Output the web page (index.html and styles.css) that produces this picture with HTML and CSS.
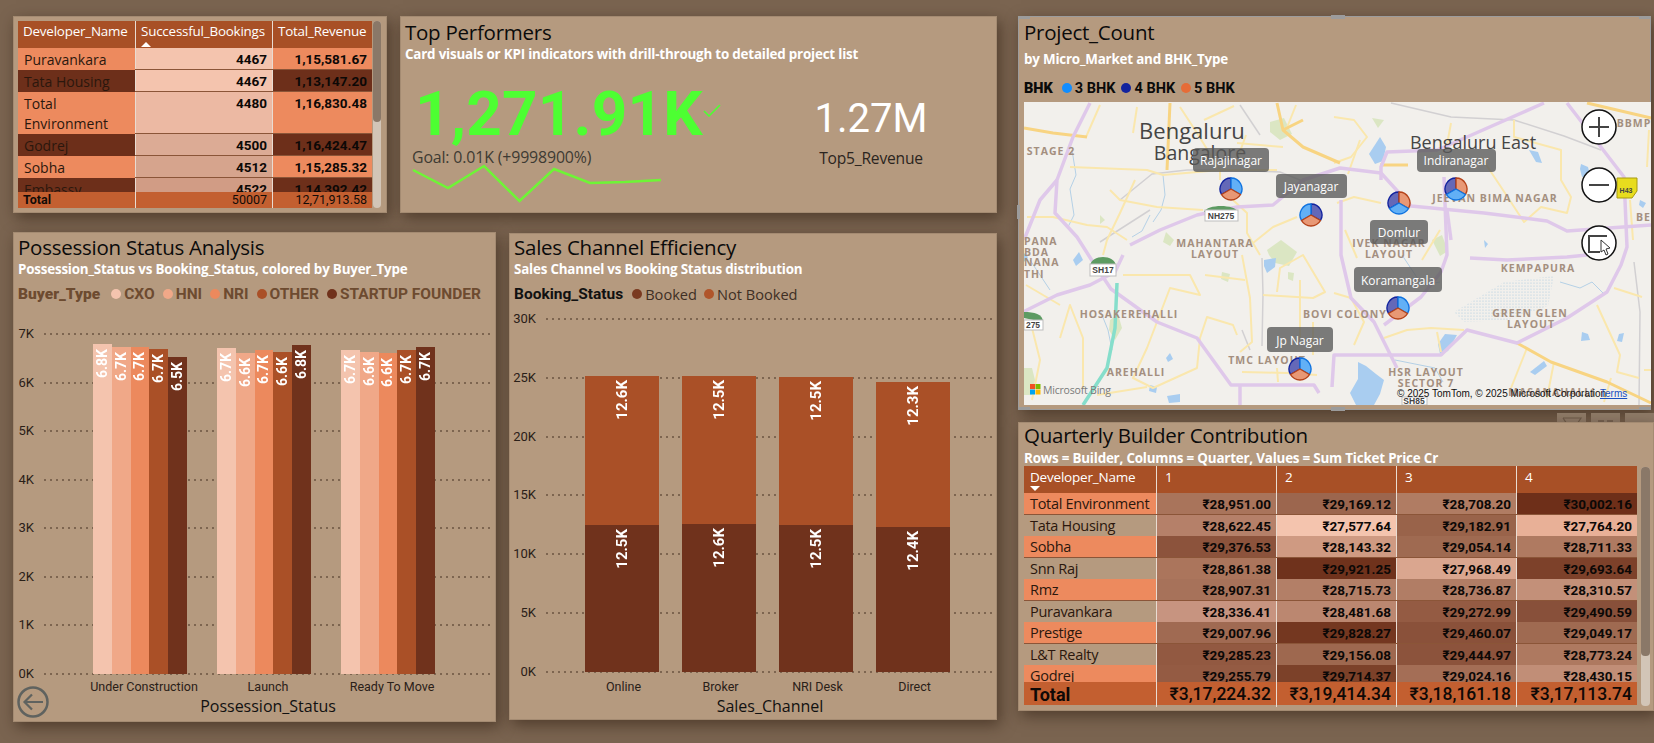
FILE: index.html
```html
<!DOCTYPE html>
<html lang="en">
<head>
<meta charset="utf-8">
<title>Real Estate Dashboard</title>
<link rel="stylesheet" href="styles.css">
</head>
<body>
<main class="page">
  <div class="left">
    <div class="top-row">
      <section class="panel dev-panel">
        <div class="t1">
          <div class="t1-row t1-head">
            <div>Developer_Name</div>
            <div>Successful_Bookings<i class="sort-up"></i></div>
            <div>Total_Revenue</div>
          </div>
          <div class="t1-body">
            <div class="t1-row"><div class="nm or">Puravankara</div><div class="num" style="background:#f4c4ae">4467</div><div class="num or">1,15,581.67</div></div>
            <div class="t1-row"><div class="nm dk">Tata Housing</div><div class="num" style="background:#f4c4ae">4467</div><div class="num dk">1,13,147.20</div></div>
            <div class="t1-row"><div class="nm or">Total Environment</div><div class="num" style="background:#ecb9a3">4480</div><div class="num or">1,16,830.48</div></div>
            <div class="t1-row"><div class="nm dk">Godrej</div><div class="num" style="background:#dcab95">4500</div><div class="num dk">1,16,424.47</div></div>
            <div class="t1-row"><div class="nm or">Sobha</div><div class="num" style="background:#d6a48d">4512</div><div class="num or">1,15,285.32</div></div>
            <div class="t1-row"><div class="nm dk">Embassy</div><div class="num" style="background:#d19c85">4522</div><div class="num dk">1,14,392.42</div></div>
          </div>
          <div class="t1-row t1-total"><div>Total</div><div>50007</div><div>12,71,913.58</div></div>
        </div>
        <div class="scroll t1-scroll"><span></span></div>
      </section>

      <section class="panel top-panel">
        <h2 class="title">Top Performers</h2>
        <p class="sub">Card visuals or KPI indicators with drill-through to detailed project list</p>
        <div class="kpis">
          <div class="kpi-main">
            <div class="kpi-line">
              <span class="kpi-big">1,271.91K</span>
              <svg class="kpi-check" viewBox="0 0 18 13" width="18" height="13"><path d="M1 7l5 5L17 1" fill="none" stroke="#4dff32" stroke-width="1.6"/></svg>
            </div>
            <div class="kpi-goal">Goal: 0.01K (+9998900%)</div>
            <svg class="spark" viewBox="0 0 250 40" width="250" height="40"><polyline points="1,6 36,24 72,2 107.500,37 142,5 178,19 213,18 249,16" fill="none" stroke="#6ef536" stroke-width="2.500"/></svg>
          </div>
          <div class="kpi-side">
            <div class="kpi-val">1.27M</div>
            <div class="kpi-name">Top5_Revenue</div>
          </div>
        </div>
      </section>
    </div>

    <div class="bottom-row">
      <section class="panel poss-panel">
        <h2 class="title">Possession Status Analysis</h2>
        <p class="sub">Possession_Status vs Booking_Status, colored by Buyer_Type</p>
        <div class="legend legend-buyer">
          <b>Buyer_Type</b>
          <span><i class="c1"></i>CXO</span><span><i class="c2"></i>HNI</span><span><i class="c3"></i>NRI</span><span><i class="c4"></i>OTHER</span><span><i class="c5"></i>STARTUP FOUNDER</span>
        </div>
        <div class="chart chart-poss">
          <div class="grid">
            <div class="gl"><span>7K</span></div><div class="gl"><span>6K</span></div><div class="gl"><span>5K</span></div><div class="gl"><span>4K</span></div><div class="gl"><span>3K</span></div><div class="gl"><span>2K</span></div><div class="gl"><span>1K</span></div><div class="gl"><span>0K</span></div>
          </div>
          <div class="groups">
            <div class="grp">
              <div class="bar c1" style="height:330px"><em>6.8K</em></div><div class="bar c2" style="height:327px"><em>6.7K</em></div><div class="bar c3" style="height:327px"><em>6.7K</em></div><div class="bar c4" style="height:325px"><em>6.7K</em></div><div class="bar c5" style="height:317px"><em>6.5K</em></div>
            </div>
            <div class="grp">
              <div class="bar c1" style="height:326px"><em>6.7K</em></div><div class="bar c2" style="height:321px"><em>6.6K</em></div><div class="bar c3" style="height:324px"><em>6.7K</em></div><div class="bar c4" style="height:322px"><em>6.6K</em></div><div class="bar c5" style="height:329px"><em>6.8K</em></div>
            </div>
            <div class="grp">
              <div class="bar c1" style="height:324px"><em>6.7K</em></div><div class="bar c2" style="height:322px"><em>6.6K</em></div><div class="bar c3" style="height:321px"><em>6.6K</em></div><div class="bar c4" style="height:324px"><em>6.7K</em></div><div class="bar c5" style="height:327px"><em>6.7K</em></div>
            </div>
          </div>
        </div>
        <div class="xlabels xl-poss"><span>Under Construction</span><span>Launch</span><span>Ready To Move</span></div>
        <div class="xtitle xt-poss">Possession_Status</div>
        <svg class="back" viewBox="0 0 32 32" width="32" height="32"><circle cx="16" cy="16" r="14.500" fill="none" stroke="#5f625f" stroke-width="2.500"/><path d="M26 16H8M15 8.500L7.500 16l7.500 7.500" fill="none" stroke="#5f625f" stroke-width="2.200"/></svg>
      </section>

      <section class="panel sales-panel">
        <h2 class="title">Sales Channel Efficiency</h2>
        <p class="sub">Sales Channel vs Booking Status distribution</p>
        <div class="legend legend-sales">
          <b>Booking_Status</b>
          <span><i class="c-booked"></i>Booked</span><span><i class="c-not"></i>Not Booked</span>
        </div>
        <div class="chart chart-sales">
          <div class="grid">
            <div class="gl"><span>30K</span></div><div class="gl"><span>25K</span></div><div class="gl"><span>20K</span></div><div class="gl"><span>15K</span></div><div class="gl"><span>10K</span></div><div class="gl"><span>5K</span></div><div class="gl"><span>0K</span></div>
          </div>
          <div class="groups">
            <div class="stack"><div class="seg c4" style="height:149px"><em>12.6K</em></div><div class="seg c5" style="height:147px"><em>12.5K</em></div></div>
            <div class="stack"><div class="seg c4" style="height:148px"><em>12.5K</em></div><div class="seg c5" style="height:148px"><em>12.6K</em></div></div>
            <div class="stack"><div class="seg c4" style="height:148px"><em>12.5K</em></div><div class="seg c5" style="height:147px"><em>12.5K</em></div></div>
            <div class="stack"><div class="seg c4" style="height:145px"><em>12.3K</em></div><div class="seg c5" style="height:145px"><em>12.4K</em></div></div>
          </div>
        </div>
        <div class="xlabels xl-sales"><span>Online</span><span>Broker</span><span>NRI Desk</span><span>Direct</span></div>
        <div class="xtitle xt-sales">Sales_Channel</div>
      </section>
    </div>
  </div>

  <div class="right">
    <section class="panel map-panel">
      <h2 class="title">Project_Count</h2>
      <p class="sub sub-map">by Micro_Market and BHK_Type</p>
      <div class="legend legend-bhk">
        <b>BHK</b>
        <span><i class="b3"></i>3 BHK</span><span><i class="b4"></i>4 BHK</span><span><i class="b5"></i>5 BHK</span>
      </div>
      <svg class="map" viewBox="1024 102 627 303" width="627" height="303">
        <defs>
          <pattern id="dots" width="3" height="3" patternUnits="userSpaceOnUse"><circle cx="1" cy="1" r=".6" fill="#a9c6de"/></pattern>
          <path id="sl-tl" d="M0 0V-11A11 11 0 0 0-9.500 5.500Z"/>
          <path id="sl-tr" d="M0 0V-11A11 11 0 0 1 9.500 5.500Z"/>
          <path id="sl-b" d="M0 0L9.500 5.500A11 11 0 0 1-9.500 5.500Z"/>
        </defs>
        <rect x="1024" y="102" width="627" height="303" fill="#f2f0ec"/>
        <g class="green soft">
          <path d="M1024 368h8l3 12-3 15h-8z"/><path d="M1270 122l14-4 8 16-12 6-10-8z"/><path d="M1267 250l14-10 16 12-8 14-14-3-6-8z"/><path d="M1166 232l8 8-4 6-7-4z"/>
          <path d="M1372 118l12 2-6 8z"/><path d="M1110 320l8-6 4 14-7 12-6-10z"/><path d="M1432 240l10-5 6 16-8 5z"/><path d="M1100 215l5 5-5 4z"/><path d="M1222 272l8 2-2 8-7-3z"/><path d="M1288 272l6 1-1 8-5-2z"/>
        </g>
        <g class="water soft">
          <path d="M1380 137l6 10-3 14-8 3-6-10z"/><path d="M1529 150l9 2 4 11-6-1z"/><path d="M1581 164l7 3 2 8-8 2-2-8z"/><path d="M1264 260l12-2-1 9-8 6-3-7z"/>
          <path d="M1445 334l12 1-9 16-8 3-2-10z"/><path d="M1358 362l8 4 10 8 8 6-4 14-6 11h-18l-6-12 8-14z"/><path d="M1544 361l3 5-12 9-5-3z"/><path d="M1167 396l13-2 0 8-11 1z"/><path d="M1582 332l6 2 2 6-9 1z"/><path d="M1619 334l5-1-2 9-5-1z"/>
          <path d="M1024 253l4 4-4 5z"/><path d="M1073 260l6-8 4 8-7 6z"/><path d="M1484 240l4 4-3 4z"/><path d="M1170 353l3 6-5 3-2-4z"/><path d="M1150 385l7 2-1 6-7-2z"/><path d="M1640 200l6 3-3 5-4-3z"/>
        </g>
        <path d="M1454 312l50-30 50-6-6 30-40 14-44 2z" fill="url(#dots)"/>
        <g class="thin-blue soft">
          <path d="M1163 175l2 20-4 15-8 12"/><path d="M1150 215l-8 16-10 6"/><path d="M1072 150l4 25-6 14 4 26-6 12"/><path d="M1030 260l20 30"/><path d="M1100 310l8 20 4 20"/><path d="M1402 255l20 30 18-3"/><path d="M1560 282l20 6 12-6 12 12"/><path d="M1395 360l40 8 8 14"/>
        </g>
        <g class="gray-road soft">
          <path d="M1391 103l60 14 63 3 50 16 37 14"/><path d="M1120 200l32-26 35-4 33 0"/><path d="M1240 105l20 30"/><path d="M1220 170l60 2 25 10"/><path d="M1262 258l1 36-1 52"/><path d="M1242 330l8 20"/><path d="M1100 242l50-32"/><path d="M1634 262l6 50-1 93"/>
        </g>
        <g class="road-y soft">
          <path d="M1070 167l77 3 16 5 57-5 57 0"/><path d="M1110 190l10 10 37 7 46 3"/><path d="M1135 180l-15 33-13 27-4 15"/><path d="M1027 217h26l34 8 20 2 20 13"/>
          <path d="M1137 107l-4 26"/><path d="M1180 107l17 26 23 37v10"/><path d="M1233 200l14 13v20l13 22"/><path d="M1297 217l-24 10-20 16"/><path d="M1237 143l46 4"/>
          <path d="M1334 117l20 3 13 17-16 20-17 6"/><path d="M1514 120v17l47 13v30l10 17-4 16-26-6-17 15-23-35-20-30"/><path d="M1451 123l-5 27"/><path d="M1649 130l-2 37"/><path d="M1381 203l-27-6-17 6"/>
          <path d="M1060 338l10-33 13 33v50"/><path d="M1123 275h67l10 20-30-7-23 60-14 30 20 10 44-20 3-30 7-21 26 8 4 10"/>
          <path d="M1242 255l8 43 2 44-12 10"/><path d="M1242 372l45 1 30 2"/><path d="M1277 368l1 14"/><path d="M1263 295l50 3 12-6-22-37-23 13-3 24"/><path d="M1313 322v33"/>
          <path d="M1334 293l17 5 13 24-10 23"/><path d="M1384 338l23-8 24-2 33 2"/><path d="M1437 332l4 20"/><path d="M1527 348l-16 40"/><path d="M1554 362l-7 36"/><path d="M1611 378l-7 24"/>
          <path d="M1614 288l28 9"/><path d="M1597 305l23 50-3 17 22 6"/><path d="M1644 370h7"/><path d="M1296 105l-10 25"/><path d="M1246 135l-8 22"/><path d="M1100 105l-14 32"/><path d="M1026 285l34 20"/><path d="M1030 320l10 40 -8 40"/><path d="M1245 280l-40 -5"/><path d="M1204 120l30 -14"/><path d="M1360 140l-12 34"/><path d="M1345 230l12 28"/><path d="M1440 230l-18 30"/><path d="M1300 280l0 60"/><path d="M1097 395l50 -8"/><path d="M1630 200l3 40"/>
        </g>
        <g class="road-o soft">
          <path d="M1024 128l29 5 34 4"/><path d="M1170 103l-3 67"/><path d="M1277 103l6 27 20 17 37 16"/><path d="M1303 120l-20 10"/><path d="M1587 103l64 15"/><path d="M1517 343l34 19 56 20 44 21"/><path d="M1380 165h28"/>
        </g>
        <g class="road-p soft">
          <path d="M1090 103l-17 34-16 43-2 33 22 24 14 22 20 30 46 33 40 16 34 47h83l5 8"/>
          <path d="M1240 385v20"/>
          <path d="M1023 312l34-17 33-10 25-13 8-17"/>
          <path d="M1024 240l16-40 17-20"/>
          <path d="M1130 245l30-15 37-15 40-8 36-2 30-25 37-12 41 5 30 33 73 7 63 8 20 10 84-6"/>
          <path d="M1544 103l-77 34-30 13-50 2-6 15v13"/>
          <path d="M1341 200v55l10 43 23 24 23 46"/>
          <path d="M1444 177l3 78-6 17-20 25-37 28"/>
          <path d="M1567 103l57 74 3 70-6 18-14 27-40 26-50 25-50-13-26 25h-107l-2 32"/>
          <path d="M1470 258l37 2 60-3 20-2"/>
          <path d="M1447 210l4 30"/>
        </g>
        <path class="teal soft" d="M1117 283l-2 45-8 40-24 37"/>
        <g class="place">
          <text x="1051" y="155" text-anchor="middle">STAGE 2</text>
          <text x="1024" y="245">PANA</text><text x="1024" y="256">BDA</text><text x="1024" y="266">NANA</text><text x="1024" y="278">THI</text>
          <text x="1215" y="247" text-anchor="middle">MAHANTARA</text><text x="1215" y="258" text-anchor="middle">LAYOUT</text>
          <text x="1389" y="247" text-anchor="middle">IVEK NAGAR</text><text x="1389" y="258" text-anchor="middle">LAYOUT</text>
          <text x="1495" y="202" text-anchor="middle">JEEVAN BIMA NAGAR</text>
          <text x="1634" y="127" text-anchor="middle">BBMP</text><text x="1651" y="221" text-anchor="end">BE</text>
          <text x="1538" y="272" text-anchor="middle">KEMPAPURA</text>
          <text x="1530" y="317" text-anchor="middle">GREEN GLEN</text><text x="1531" y="328" text-anchor="middle">LAYOUT</text>
          <text x="1345" y="318" text-anchor="middle">BOVI COLONY</text>
          <text x="1129" y="318" text-anchor="middle">HOSAKEREHALLI</text>
          <text x="1136" y="376" text-anchor="middle">AREHALLI</text>
          <text x="1267" y="364" text-anchor="middle">TMC LAYOUT</text>
          <text x="1426" y="376" text-anchor="middle">HSR LAYOUT</text><text x="1426" y="387" text-anchor="middle">SECTOR 7</text>
          <text x="1552" y="396" text-anchor="middle">MASANAHALLI</text>
        </g>
        <text class="city" x="1192" y="139">Bengaluru</text>
        <text class="city2" x="1200" y="160">Bangalore</text>
        <text class="city3" x="1473" y="149">Bengaluru East</text>
        <g class="shield">
          <path class="s-green" d="M1204 212c3-8 31-8 34 0z"/><rect x="1205" y="210" width="33" height="11"/><text x="1221" y="219">NH275</text>
          <path class="s-green" d="M1090 266c1-12 25-12 26 0z"/><rect x="1090" y="264" width="26" height="12"/><text x="1103" y="273">SH17</text>
          <path class="s-green" d="M1024 318v-6c10 0 19 2 19 10z"/><rect x="1024" y="320" width="19" height="10"/><text x="1033" y="328">275</text>
          <rect x="1402" y="397" width="25" height="8"/><text x="1414" y="404">SH85</text>
          <path class="s-yellow" d="M1617 178h20v13l-5 7h-15z"/><text class="s-h" x="1626" y="193">H43</text>
        </g>
        <g class="pie" transform="translate(1231 189)"><use href="#sl-tl" class="p-d"/><use href="#sl-tr" class="p-l"/><use href="#sl-b" class="p-o"/></g>
        <g class="pie" transform="translate(1311 215)"><use href="#sl-tr" class="p-d"/><use href="#sl-tl" class="p-l"/><use href="#sl-b" class="p-o"/></g>
        <g class="pie" transform="translate(1399 203)"><use href="#sl-tl" class="p-d"/><use href="#sl-tr" class="p-o"/><use href="#sl-b" class="p-l"/></g>
        <g class="pie" transform="translate(1456 189)"><use href="#sl-tl" class="p-d"/><use href="#sl-tr" class="p-o"/><use href="#sl-b" class="p-l"/></g>
        <g class="pie" transform="translate(1398 308)"><use href="#sl-tl" class="p-d"/><use href="#sl-tr" class="p-l"/><use href="#sl-b" class="p-o"/></g>
        <g class="pie" transform="translate(1300 369)"><use href="#sl-tl" class="p-d"/><use href="#sl-tr" class="p-l"/><use href="#sl-b" class="p-o"/></g>
        <g class="tip">
          <rect x="1193" y="148" width="76" height="24" rx="4"/><text x="1231" y="165">Rajajinagar</text>
          <rect x="1276" y="174" width="71" height="24" rx="4"/><text x="1311" y="191">Jayanagar</text>
          <rect x="1417" y="149" width="79" height="23" rx="4"/><text x="1456" y="165">Indiranagar</text>
          <rect x="1370" y="220" width="58" height="24" rx="4"/><text x="1399" y="237">Domlur</text>
          <rect x="1354" y="267" width="88" height="25" rx="4"/><text x="1398" y="285">Koramangala</text>
          <rect x="1267" y="327" width="66" height="25" rx="4"/><text x="1300" y="345">Jp Nagar</text>
        </g>
        <g class="mapbtn">
          <circle cx="1599" cy="127" r="17"/><path d="M1589 127h20M1599 117v20"/>
          <circle cx="1599" cy="185" r="17"/><path d="M1589 185h20"/>
          <circle cx="1599" cy="243" r="17"/><path d="M1607 236h-18v16h11"/>
          <path class="cursor" d="M1601 240l9 8-4 1 2 5-2 1-2-5-3 2z"/>
        </g>
        <rect x="1030" y="384" width="5" height="5" fill="#f25022"/><rect x="1035.500" y="384" width="5" height="5" fill="#7fba00"/><rect x="1030" y="389.500" width="5" height="5" fill="#00a4ef"/><rect x="1035.500" y="389.500" width="5" height="5" fill="#ffb900"/>
        <text class="bing" x="1043" y="394">Microsoft Bing</text>
        <text class="attrib" x="1397" y="397">© 2025 TomTom, © 2025 Microsoft Corporation</text>
        <text class="terms" x="1600" y="397">Terms</text>
      </svg>
      <i class="h h-tl"></i><i class="h h-tm"></i><i class="h h-tr"></i><i class="h h-bl"></i><i class="h h-bm"></i><i class="h h-br"></i><i class="h h-lm"></i>
      <div class="vh-icons">
        <span><svg viewBox="0 0 29 11" width="29" height="11"><path d="M6 5h18l-4 6" fill="none" stroke="#6d5a49" stroke-width="1.200"/><path d="M6 5l4 6" fill="none" stroke="#6d5a49" stroke-width="1.200"/></svg></span>
        <span><svg viewBox="0 0 29 11" width="29" height="11"><path d="M7 8h6M16 8h6" fill="none" stroke="#6d5a49" stroke-width="1.500"/></svg></span>
        <span></span>
      </div>
    </section>

    <section class="panel q-panel">
      <h2 class="title">Quarterly Builder Contribution</h2>
      <p class="sub sub-q">Rows = Builder, Columns = Quarter, Values = Sum Ticket Price Cr</p>
      <div class="q">
        <div class="q-row q-head"><div>Developer_Name<i class="sort-down"></i></div><div>1</div><div>2</div><div>3</div><div>4</div></div>
        <div class="q-body">
          <div class="q-row"><div class="nm or">Total Environment</div><div class="num" style="background:#a9745b">₹28,951.00</div><div class="num" style="background:#9c664e">₹29,169.12</div><div class="num" style="background:#b07c63">₹28,708.20</div><div class="num" style="background:#6e2f19">₹30,002.16</div></div>
          <div class="q-row"><div class="nm tan">Tata Housing</div><div class="num" style="background:#b58069">₹28,622.45</div><div class="num" style="background:#f4c4ae">₹27,577.64</div><div class="num" style="background:#99634a">₹29,182.91</div><div class="num" style="background:#e8b097">₹27,764.20</div></div>
          <div class="q-row"><div class="nm or">Sobha</div><div class="num" style="background:#8c533c">₹29,376.53</div><div class="num" style="background:#cf9a82">₹28,143.32</div><div class="num" style="background:#9f6a51">₹29,054.14</div><div class="num" style="background:#af7a61">₹28,711.33</div></div>
          <div class="q-row"><div class="nm tan">Snn Raj</div><div class="num" style="background:#ab755c">₹28,861.38</div><div class="num" style="background:#6f321c">₹29,921.25</div><div class="num" style="background:#daa68f">₹27,968.49</div><div class="num" style="background:#7d412a">₹29,693.64</div></div>
          <div class="q-row"><div class="nm or">Rmz</div><div class="num" style="background:#a7725a">₹28,907.31</div><div class="num" style="background:#b37f67">₹28,715.73</div><div class="num" style="background:#b17d65">₹28,736.87</div><div class="num" style="background:#c39079">₹28,310.57</div></div>
          <div class="q-row"><div class="nm tan">Puravankara</div><div class="num" style="background:#c79480">₹28,336.41</div><div class="num" style="background:#bb8770">₹28,481.68</div><div class="num" style="background:#945b43">₹29,272.99</div><div class="num" style="background:#88503a">₹29,490.59</div></div>
          <div class="q-row"><div class="nm or">Prestige</div><div class="num" style="background:#a06a52">₹29,007.96</div><div class="num" style="background:#743720">₹29,828.27</div><div class="num" style="background:#8a513a">₹29,460.07</div><div class="num" style="background:#9f6a51">₹29,049.17</div></div>
          <div class="q-row"><div class="nm tan">L&amp;T Realty</div><div class="num" style="background:#925941">₹29,285.23</div><div class="num" style="background:#9e684f">₹29,156.08</div><div class="num" style="background:#8c533c">₹29,444.97</div><div class="num" style="background:#ae7960">₹28,773.24</div></div>
          <div class="q-row"><div class="nm or">Godrej</div><div class="num" style="background:#945b43">₹29,255.79</div><div class="num" style="background:#7c4129">₹29,714.37</div><div class="num" style="background:#a46e56">₹29,024.16</div><div class="num" style="background:#c18e77">₹28,430.15</div></div>
        </div>
        <div class="q-row q-total"><div>Total</div><div>₹3,17,224.32</div><div>₹3,19,414.34</div><div>₹3,18,161.18</div><div>₹3,17,113.74</div></div>
      </div>
      <div class="scroll q-scroll"><span></span></div>
    </section>
  </div>
</main>
</body>
</html>
```

FILE: styles.css
```css
* { box-sizing: border-box; }
html, body { margin: 0; height: 743px; overflow: hidden; }
body { background: #7a6450; font-family: "Open Sans", "Noto Sans", sans-serif; color: #111; }
h2, p { margin: 0; }
i, em { font-style: normal; }

.page { display: flex; gap: 21px; padding: 16px 0 0 13px; width: 1654px; height: 743px; }
.left { width: 984px; display: flex; flex-direction: column; gap: 19px; }
.right { width: 636px; display: flex; flex-direction: column; gap: 12px; }
.top-row { display: flex; gap: 13px; height: 197px; }
.bottom-row { display: flex; gap: 13px; }

.panel { position: relative; background: #b59a7f; box-shadow: 3px 5px 14px rgba(45, 28, 14, .55); border: 1px solid #a48b72; }
.title { font-size: 20.5px; font-weight: 400; line-height: 26px; color: #0b0b0b; margin-top: 2px; letter-spacing: -.25px; white-space: nowrap; }
.sub { font-size: 13.4px; font-weight: 700; line-height: 18px; color: #fff; white-space: nowrap; letter-spacing: -.2px; }

/* developer table */
.dev-panel { width: 374px; padding: 4px 0 0 4px; display: flex; }
.t1 { width: 354px; }
.t1-row { display: grid; grid-template-columns: 117px 137px 100px; }
.t1-head { height: 27px; background: #a85026; color: #fff; font-size: 13.4px; line-height: 20px; letter-spacing: -.2px; }
.t1-head > div { padding-left: 5px; position: relative; border-left: 1px solid #e9dcd2; white-space: nowrap; }
.t1-head > div:first-child { border-left: 0; }
.t1-body { height: 144px; overflow: hidden; }
.t1-body .t1-row { border-bottom: 1px solid #8b5538; }
.t1-body .nm { font-size: 14px; line-height: 20px; padding: 2px 0 0 6px; margin-bottom: -1px; color: #2b170d; }
.num { font-family: Roboto, "Noto Sans", sans-serif; font-weight: 700; font-size: 13.5px; text-align: right; padding-right: 5px; line-height: 18px; color: #0c0806; border-left: 1px solid #e9dcd2; }
.t1-body .num { padding-top: 2px; }
.or { background: #ed8a5e; }
.dk { background: #6d2f1a; }
.tan { background: #b59a7f; }
.t1-total { height: 16px; background: #c35f30; font-family: Roboto, sans-serif; font-size: 12.500px; line-height: 16px; color: #120b07; }
.t1-total > div { text-align: right; padding-right: 5px; border-left: 1px solid #e9dcd2; }
.t1-total > div:first-child { text-align: left; padding-left: 5px; font-weight: 700; border-left: 0; }
.scroll { background: #d2c5b7; border-radius: 4px; position: absolute; }
.scroll span { display: block; background: #8a7868; border-radius: 4px; }
.t1-scroll { left: 359px; top: 4px; width: 8px; height: 187px; }
.t1-scroll span { height: 101px; }
.sort-up, .sort-down { position: absolute; width: 0; height: 0; border-left: 5px solid transparent; border-right: 5px solid transparent; }
.sort-up { left: 5px; top: 21px; border-bottom: 5px solid #fff; }
.sort-down { left: 6px; top: 20px; border-top: 5px solid #fff; }

/* KPI panel */
.top-panel { width: 597px; padding-left: 4px; }
.kpis { display: flex; margin-top: 21px; }
.kpi-main { width: 366px; padding-left: 7px; }
.kpi-line { display: flex; height: 60px; padding-left: 3px; }
.kpi-big { font-family: Roboto, sans-serif; font-weight: 700; font-size: 62px; line-height: 60px; color: #4dff32; letter-spacing: .2px; white-space: nowrap; }
.kpi-check { margin: 20px 0 0 0; }
.kpi-goal { font-size: 15.9px; line-height: 20px; margin-top: 3px; color: #3e3a33; letter-spacing: -.15px; white-space: nowrap; }
.spark { display: block; margin-top: -3px; }
.kpi-side { width: 200px; text-align: center; }
.kpi-val { font-family: Roboto, sans-serif; font-size: 40px; line-height: 50px; color: #fff; margin-top: 10px; }
.kpi-name { font-size: 15.6px; line-height: 22px; margin-top: 3px; color: #2b2520; letter-spacing: -.2px; }

/* legends */
.legend { display: flex; align-items: center; height: 20px; white-space: nowrap; }
.legend i { display: inline-block; width: 10px; height: 10px; border-radius: 50%; margin-right: 3px; }
.legend span { display: flex; align-items: center; }
.legend-buyer { margin-top: 6px; font-family: Roboto, sans-serif; font-size: 15.5px; font-weight: 700; color: #6d4b30; gap: 8px; }
.legend-buyer b { margin-right: 3px; }
.legend-sales { margin-top: 6px; font-size: 14.6px; color: #3f2f24; gap: 7px; }
.legend-sales b { color: #111; margin-right: 2px; font-family: Roboto, sans-serif; font-size: 15.5px; }
.legend-bhk { margin-top: 9px; font-family: Roboto, sans-serif; font-size: 14.5px; font-weight: 700; color: #0a0a0a; gap: 6px; }
.legend-bhk b { margin-right: 3px; }
.c1 { background: #f4c4ae; }
.c2 { background: #f0a888; }
.c3 { background: #ec895d; }
.c4 { background: #aa5027; }
.c5 { background: #70321c; }
.c-booked { background: #7a3a20; }
.c-not { background: #b0552b; }
.b3 { background: #118dff; }
.b4 { background: #12239e; }
.b5 { background: #e66c37; }

/* charts */
.poss-panel { width: 483px; height: 490px; padding-left: 4px; }
.poss-panel .title { margin-top: 1px; }
.sales-panel { width: 488px; height: 487px; padding-left: 4px; margin-top: 1px; }
.sales-panel .title { margin-top: 0; }
.chart { position: relative; }
.chart-poss { height: 342px; margin: 29px 0 0 -4px; }
.chart-sales { height: 355px; margin: 14px 0 0 -4px; }
.grid { display: flex; flex-direction: column; justify-content: space-between; height: 100%; }
.gl { height: 2px; position: relative; background: repeating-linear-gradient(90deg, #7d6550 0 2px, transparent 2px 6px); }
.chart-poss .gl { margin: 0 5px 0 30px; }
.chart-sales .gl { margin: 0 4px 0 36px; }
.gl span { position: absolute; right: 100%; top: -8px; margin-right: 10px; font-family: Roboto, sans-serif; font-size: 13px; line-height: 18px; color: #2a2018; }
.groups { position: absolute; inset: 0 auto 1px 0; display: flex; align-items: flex-end; }
.chart-poss .groups { padding-left: 79px; gap: 30px; }
.chart-sales .groups { padding-left: 75px; gap: 23px; }
.grp { display: flex; align-items: flex-end; width: 94px; }
.bar { width: 18.8px; display: flex; justify-content: center; }
.stack { width: 74px; }
.seg { display: flex; justify-content: center; }
.bar em, .seg em { writing-mode: vertical-rl; transform: rotate(180deg); font-family: Roboto, sans-serif; font-weight: 700; color: #fff; height: max-content; }
.bar em { font-size: 14px; line-height: 15px; margin-top: 5px; }
.seg em { font-size: 15px; line-height: 16px; margin-top: 4px; }
.xlabels { display: flex; font-family: Roboto, sans-serif; font-size: 12.500px; line-height: 18px; color: #2a2018; white-space: nowrap; text-align: center; }
.xl-poss { margin: 3px 0 0 64px; }
.xl-poss span { width: 124px; }
.xl-sales { margin: 5px 0 0 61px; }
.xl-sales span { width: 97px; }
.xtitle { text-align: center; font-size: 16px; line-height: 22px; color: #111; margin-top: -1px; }
.xt-poss { width: 508px; margin-left: -4px; }
.xt-sales { width: 520px; margin-left: -4px; }
.back { position: absolute; left: 3px; bottom: 3px; }

/* map */
.map-panel { width: 633px; height: 394px; padding-left: 5px; border: 1px solid #9d9d9d; }
.sub-map { margin-top: 4px; line-height: 20px; }
.map { display: block; margin-top: 4px; overflow: hidden; }
.soft { filter: blur(.35px); }
.green path { fill: #dbe6c3; }
.water path { fill: #a9cdf0; }
.thin-blue path { fill: none; stroke: #b4d0e6; stroke-width: 1; }
.gray-road path { fill: none; stroke: #d2d0d2; stroke-width: 1.500; stroke-linejoin: round; }
.road-y path { fill: none; stroke: #fae7ad; stroke-width: 2; stroke-linejoin: round; }
.road-o path { fill: none; stroke: #f8d482; stroke-width: 3; stroke-linejoin: round; }
.road-p path { fill: none; stroke: #dfc8ea; stroke-width: 3.500; stroke-linejoin: round; }
.teal { fill: none; stroke: #86decb; stroke-width: 3.500; }
.place text { font-family: "Open Sans", sans-serif; font-size: 10.500px; font-weight: 700; letter-spacing: 1px; fill: #a48f7f; }
.city, .city2, .city3 { font-family: "Open Sans", sans-serif; fill: #454545; text-anchor: middle; }
.city { font-size: 22px; }
.city2 { font-size: 19.500px; }
.city3 { font-size: 18px; }
.shield rect { fill: #fff; stroke: #bdbdbd; }
.shield text { font-family: "Liberation Sans", sans-serif; font-size: 8.500px; font-weight: 700; fill: #444; text-anchor: middle; }
.s-green { fill: #5d9b62; }
.s-yellow { fill: #e8dc1e; stroke: #a89b10; }
.shield .s-h { font-size: 7px; }
.pie use { stroke-width: 1.400; stroke-linejoin: round; }
.p-d { fill: #6468b8; stroke: #12239e; }
.p-l { fill: #62b0f6; stroke: #0f73e0; }
.p-o { fill: #e89875; stroke: #b5431a; }
.tip rect { fill: rgba(88, 88, 88, .78); }
.tip text { font-family: "Open Sans", sans-serif; font-size: 12px; fill: #fff; text-anchor: middle; }
.mapbtn circle { fill: #fff; stroke: #111; stroke-width: 1.500; }
.mapbtn path { fill: none; stroke: #444; stroke-width: 2; }
.mapbtn .cursor { fill: #fff; stroke: #333; stroke-width: 1; }
.bing { font-family: "Open Sans", sans-serif; font-size: 10.500px; fill: #7a7a7a; letter-spacing: -.2px; }
.attrib { font-family: "Liberation Sans", sans-serif; font-size: 10px; fill: #111; }
.terms { font-family: "Liberation Sans", sans-serif; font-size: 10px; fill: #1a4fc0; text-decoration: underline; }

/* selection handles & visual header */
.h { position: absolute; background: #9c9c9c; }
.h-tl { left: -1px; top: -1px; width: 12px; height: 3px; }
.h-tm { left: 312px; top: -2px; width: 14px; height: 4px; }
.h-tr { right: -1px; top: -1px; width: 12px; height: 3px; }
.h-bl { left: -1px; bottom: -1px; width: 12px; height: 3px; }
.h-bm { left: 312px; bottom: -2px; width: 14px; height: 4px; }
.h-br { right: -1px; bottom: -1px; width: 12px; height: 3px; }
.h-lm { left: -2px; top: 188px; width: 3px; height: 14px; }
.vh-icons { position: absolute; left: 538px; top: 396px; display: flex; gap: 5px; }
.vh-icons span { display: block; width: 29px; height: 11px; background: #8e7a67; }
.vh-icons svg { display: block; }

/* quarterly matrix */
.q-panel { width: 636px; height: 289px; padding-left: 5px; z-index: 1; }
.q-panel .title { margin-top: -1px; }
.sub-q { margin-top: 3px; line-height: 15px; }
.q { width: 613px; }
.q-row { display: grid; grid-template-columns: 132px 120px 120px 120px 121px; }
.q-head { height: 27px; background: #a85026; color: #fff; font-size: 13.5px; line-height: 22px; }
.q-head > div { position: relative; padding-left: 8px; border-left: 1px solid #e9dcd2; letter-spacing: -.2px; }
.q-head > div:first-child { border-left: 0; padding-left: 6px; }
.q-body { height: 189px; overflow: hidden; }
.q-body .q-row { height: 21.5px; border-bottom: 1px solid #8b5538; }
.q-body .nm { font-size: 14.5px; line-height: 20px; padding: 1px 0 0 6px; white-space: nowrap; letter-spacing: -.3px; color: #2b170d; }
.q-body .num { padding-top: 2px; }
.q-total { height: 23px; background: #c35f30; font-family: Roboto, sans-serif; font-weight: 500; font-size: 17.5px; line-height: 25px; color: #0f0906; }
.q-total > div { text-align: right; padding-right: 5px; border-left: 1px solid #e9dcd2; white-space: nowrap; }
.q-total > div:first-child { text-align: left; padding-left: 6px; font-weight: 700; font-size: 18px; border-left: 0; }
.q-scroll { left: 622px; top: 44px; width: 9px; height: 239px; }
.q-scroll span { height: 189px; }
```
